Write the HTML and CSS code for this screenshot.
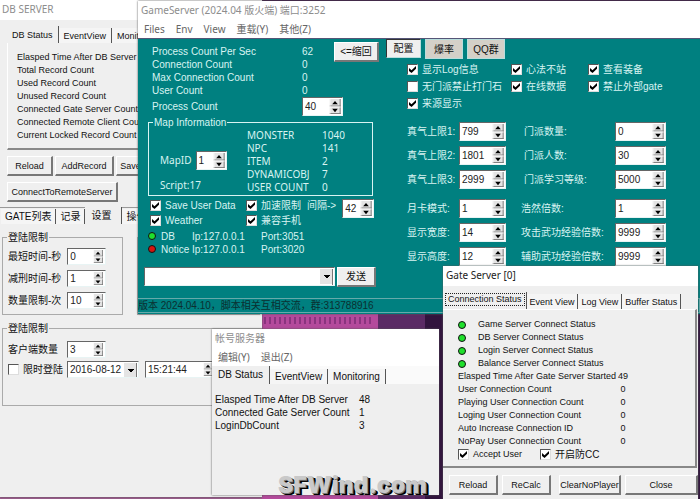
FILE: index.html
```
<!DOCTYPE html>
<html lang="zh-CN">
<head>
<meta charset="utf-8">
<title>GameServer</title>
<link rel="stylesheet" href="styles.css">
</head>
<body>
<svg class="defs" aria-hidden="true">
  <symbol id="arrows" viewBox="0 0 12 16">
    <path d="M0 0H12V16H0Z" fill="#e4e4e4"/>
    <path d="M0 7.5H12M0 15.5H12M11.5 0V16" stroke="#777" fill="none"/>
    <path d="M0 8.5H12M0.5 0V16" stroke="#fff" fill="none"/>
    <path d="M6 2L9 5.500H3ZM3 10.500H9L6 14Z" fill="#000"/>
  </symbol>
</svg>
<main class="desktop">
  <div class="wallpaper"></div>

  <section class="window db">
    <header class="title inactive">DB SERVER</header>
    <nav class="tabs">
      <button class="tab current">DB Status</button><button class="tab">EventView</button><button class="tab">Monitoring</button>
    </nav>
    <div class="panel db-list">
      <p>Elasped Time After DB Server Started</p>
      <p>Total Record Count</p>
      <p>Used Record Count</p>
      <p>Unused Record Count</p>
      <p>Connected Gate Server Count</p>
      <p>Connected Remote Client Count</p>
      <p>Current Locked Record Count</p>
    </div>
    <div class="db-buttons">
      <button class="btn">Reload</button><button class="btn">AddRecord</button><button class="btn">SaveRecord</button>
      <button class="btn wide">ConnectToRemoteServer</button>
    </div>
    <nav class="tabs cn-tabs">
      <button class="tab">GATE列表</button><button class="tab">记录</button><button class="tab current">设置</button><button class="tab">操作</button>
    </nav>
    <div class="db-settings">
      <div class="pair">
        <fieldset class="group limits">
          <legend>登陆限制</legend>
          <label><span>最短时间-秒</span><span class="spin"><input value="0"><svg><use href="#arrows"/></svg></span></label>
          <label><span>减刑时间-秒</span><span class="spin"><input value="1"><svg><use href="#arrows"/></svg></span></label>
          <label><span>数量限制-次</span><span class="spin"><input value="10"><svg><use href="#arrows"/></svg></span></label>
        </fieldset>
        <fieldset class="group rest"></fieldset>
      </div>
      <fieldset class="group clients">
        <legend>登陆限制</legend>
        <label class="row"><span class="client-name">客户端数量</span><span class="spin"><input value="3"><svg><use href="#arrows"/></svg></span></label>
        <div class="row">
          <label class="check"><input type="checkbox">限时登陆</label>
          <select class="date" aria-label="日期"><option>2016-08-12</option></select>
          <span class="spin time"><input value="15:21:44" aria-label="时间"><svg><use href="#arrows"/></svg></span>
        </div>
      </fieldset>
    </div>
  </section>

  <section class="window game">
    <header class="title inactive">GameServer (2024.04 版火端) 端口:3252</header>
    <nav class="menu"><a href="#">Files</a><a href="#">Env</a><a href="#">View</a><a href="#">重载(Y)</a><a href="#">其他(Z)</a></nav>
    <div class="game-body">
      <div class="game-left">
        <div class="top">
          <table class="stats">
            <tr><td>Process Count Per Sec</td><td>62</td></tr>
            <tr><td>Connection Count</td><td>0</td></tr>
            <tr><td>Max Connection Count</td><td>0</td></tr>
            <tr><td>User Count</td><td>0</td></tr>
          </table>
          <button class="btn shrink">&lt;=缩回</button>
        </div>
        <label class="process"><span>Process Count</span><span class="spin"><input value="40"><svg><use href="#arrows"/></svg></span></label>
        <fieldset class="map">
          <legend>Map Information</legend>
          <div class="map-id">
            <label><span>MapID</span><span class="spin"><input value="1"><svg><use href="#arrows"/></svg></span></label>
            <p>Script:17</p>
          </div>
          <table class="objects">
            <tr><td>MONSTER</td><td>1040</td></tr>
            <tr><td>NPC</td><td>141</td></tr>
            <tr><td>ITEM</td><td>2</td></tr>
            <tr><td>DYNAMICOBJ</td><td>7</td></tr>
            <tr><td>USER COUNT</td><td>0</td></tr>
          </table>
        </fieldset>
        <div class="options">
          <div class="stack">
            <label class="check"><input type="checkbox" checked>Save User Data</label>
            <label class="check"><input type="checkbox" checked>Weather</label>
          </div>
          <div class="stack">
            <label class="check"><input type="checkbox" checked>加速限制</label>
            <label class="check"><input type="checkbox" checked>兼容手机</label>
          </div>
          <label class="gap-field">间隔-&gt;<span class="spin"><input value="42"><svg><use href="#arrows"/></svg></span></label>
        </div>
        <table class="links">
          <tr><td><i class="led"></i></td><td>DB</td><td>Ip:127.0.0.1</td><td>Port:3051</td></tr>
          <tr><td><i class="led red"></i></td><td>Notice</td><td>Ip:127.0.0.1</td><td>Port:3020</td></tr>
        </table>
        <div class="send">
          <select aria-label="消息"><option></option></select>
          <button class="btn">发送</button>
        </div>
      </div>
      <div class="game-right">
        <nav class="flat-tabs"><button class="on">配置</button><button>爆率</button><button>QQ群</button></nav>
        <div class="checks">
          <label class="check"><input type="checkbox" checked>显示Log信息</label>
          <label class="check"><input type="checkbox" checked>心法不站</label>
          <label class="check"><input type="checkbox" checked>查看装备</label>
          <label class="check"><input type="checkbox">无门派禁止打门石</label>
          <label class="check"><input type="checkbox" checked>在线数据</label>
          <label class="check"><input type="checkbox" checked>禁止外部gate</label>
          <label class="check"><input type="checkbox" checked>来源显示</label>
        </div>
        <div class="fields">
          <label for="q1">真气上限1:</label><span class="spin"><input id="q1" value="799"><svg><use href="#arrows"/></svg></span>
          <label for="m1">门派数量:</label><span class="spin"><input id="m1" value="0"><svg><use href="#arrows"/></svg></span>
          <label for="q2">真气上限2:</label><span class="spin"><input id="q2" value="1801"><svg><use href="#arrows"/></svg></span>
          <label for="m2">门派人数:</label><span class="spin"><input id="m2" value="30"><svg><use href="#arrows"/></svg></span>
          <label for="q3">真气上限3:</label><span class="spin"><input id="q3" value="2999"><svg><use href="#arrows"/></svg></span>
          <label for="m3">门派学习等级:</label><span class="spin"><input id="m3" value="5000"><svg><use href="#arrows"/></svg></span>
        </div>
        <div class="fields second">
          <label for="k1">月卡模式:</label><span class="spin"><input id="k1" value="1"><svg><use href="#arrows"/></svg></span>
          <label for="h1">浩然倍数:</label><span class="spin"><input id="h1" value="1"><svg><use href="#arrows"/></svg></span>
          <label for="k2">显示宽度:</label><span class="spin"><input id="k2" value="14"><svg><use href="#arrows"/></svg></span>
          <label for="h2">攻击武功经验倍数:</label><span class="spin"><input id="h2" value="9999"><svg><use href="#arrows"/></svg></span>
          <label for="k3">显示高度:</label><span class="spin"><input id="k3" value="12"><svg><use href="#arrows"/></svg></span>
          <label for="h3">辅助武功经验倍数:</label><span class="spin"><input id="h3" value="9999"><svg><use href="#arrows"/></svg></span>
        </div>
      </div>
    </div>
    <footer class="status">版本 2024.04.10，脚本相关互相交流，群:313788916</footer>
  </section>

  <section class="window account">
    <header class="title inactive">帐号服务器</header>
    <nav class="menu"><a href="#">编辑(Y)</a><a href="#">退出(Z)</a></nav>
    <nav class="tabs">
      <button class="tab current">DB Status</button><button class="tab">EventView</button><button class="tab">Monitoring</button>
    </nav>
    <table class="account-list">
      <tr><td>Elasped Time After DB Server</td><td>48</td></tr>
      <tr><td>Connected Gate Server Count</td><td>1</td></tr>
      <tr><td>LoginDbCount</td><td>3</td></tr>
    </table>
  </section>

  <section class="window gate">
    <header class="title">Gate Server [0]</header>
    <nav class="tabs">
      <button class="tab current"><span class="focus">Connection Status</span></button><button class="tab">Event View</button><button class="tab">Log View</button><button class="tab">Buffer Status</button>
    </nav>
    <div class="panel gate-panel">
      <ul>
        <li><i class="led"></i>Game Server Connect Status</li>
        <li><i class="led"></i>DB Server Connect Status</li>
        <li><i class="led"></i>Login Server Connect Status</li>
        <li><i class="led"></i>Balance Server Connect Status</li>
      </ul>
      <table>
        <tr><td>Elasped Time After Gate Server Started</td><td>49</td></tr>
        <tr><td>User Connection Count</td><td>0</td></tr>
        <tr><td>Playing User Connection Count</td><td>0</td></tr>
        <tr><td>Loging User Connection Count</td><td>0</td></tr>
        <tr><td>Auto Increase Connection ID</td><td>0</td></tr>
        <tr><td>NoPay User Connection Count</td><td>0</td></tr>
      </table>
      <div class="gate-checks">
        <label class="check"><input type="checkbox" checked>Accept User</label>
        <label class="check guard"><input type="checkbox" checked>开启防CC</label>
      </div>
    </div>
    <div class="gate-buttons">
      <button class="btn">Reload</button><button class="btn">ReCalc</button><button class="btn">ClearNoPlayer</button><button class="btn">Close</button>
    </div>
  </section>

  <div class="watermark">SFWind.com</div>
</main>
</body>
</html>
```
FILE: styles.css
```
:root {
  --ui: "Liberation Sans", "Noto Sans CJK SC", sans-serif;
  --title: "Noto Sans", "Noto Sans CJK SC", sans-serif;
  --face: #efefef;
  --teal: #008080;
}
* { box-sizing: border-box; }
body { margin: 0; font: 10px/13px var(--ui); color: #111; }
p, ul { margin: 0; padding: 0; list-style: none; }
table { border-collapse: collapse; }
td { padding: 0; white-space: nowrap; }
button, input, select { font: inherit; color: inherit; margin: 0; }
fieldset { margin: 0; padding: 0; min-width: 0; }
legend { padding: 0 1px; }
label { white-space: nowrap; }
.defs { display: none; }

.desktop { position: relative; height: 100vh; overflow: hidden; background: #3a1744; }
.wallpaper {
  position: absolute; inset: 313px 0 0 0;
  background:
    repeating-linear-gradient(90deg, #8a347f 0 2px, transparent 2px 5px) 264px 4px / 110px 7px no-repeat,
    linear-gradient(90deg, #9b5b8c 0 262px, #b44a9c 262px 378px, #5b2b65 378px 425px, #32143e 425px);
}

/* Windows lie freely on the desktop */
.window { position: absolute; background: var(--face); box-shadow: 0 0 2px #555; overflow: hidden; }
.db { left: 0; top: 0; width: 262px; height: 497px; }
.game { left: 138px; right: 0; top: 1px; height: 313px; background: var(--teal); color: #d8f4f2; }
.account { left: 212px; top: 329px; width: 227px; height: 166px; }
.gate { right: 2px; top: 266px; width: 255px; bottom: 0; }

.title { height: 20px; padding: 0 3px; background: #fff; color: #222; font: 10px/18px var(--title); white-space: nowrap; }
.inactive { color: #8d8d8d; }
.menu { display: flex; gap: 11px; height: 17px; padding: 0 6px; background: #fff; font: 10px/16px var(--title); }
.menu a { color: #666; text-decoration: none; }

.tabs { display: flex; align-items: flex-end; white-space: nowrap; }
.tab { height: 15px; padding: 0 4px; border: 0; border-right: 1px solid #555; background: #f5f5f5; line-height: 14px; }
.tab.current { height: 17px; background: var(--face); line-height: 12px; }
.panel { border: 0 solid #888; border-width: 0 2px 2px 0; }

.btn { height: 20px; padding: 0; border: 1px solid #fff; border-right: 2px solid #777; border-bottom: 2px solid #777; background: var(--face); color: #111; line-height: 16px; white-space: nowrap; }

.spin { display: flex; height: 19px; padding: 1px; border: 1px solid #e8f4f4; border-top-color: #666; border-left-color: #666; background: #fff; color: #222; }
.spin input { flex: 1; width: 0; min-width: 0; height: 100%; padding: 0 1px; border: 0; background: transparent; outline: 0; }
.spin svg { flex: none; width: 12px; height: 100%; }

.check { display: flex; align-items: center; gap: 4px; height: 13px; }
.check input { appearance: none; display: grid; place-items: center; width: 11px; height: 11px; background: #fff; border: 1px solid #ddd; border-top-color: #555; border-left-color: #555; }
.check input:checked::before { content: ""; width: 7px; height: 7px; background: #000; clip-path: polygon(0 30%, 36% 60%, 100% 0, 100% 38%, 36% 100%, 0 70%); }

.led { display: inline-block; width: 8px; height: 8px; border: 1px solid #111; border-radius: 50%; background: #1fe02c; }
.led.red { background: #d4150f; }

select { appearance: none; border: 1px solid #e8f4f4; border-top-color: #666; border-left-color: #666; border-radius: 0; color: #222;
  background:
    conic-gradient(from 315deg at 50% 100%, #000 0 90deg, transparent 0) right 4px top 7px / 6px 3px no-repeat,
    linear-gradient(#777, #777) right 1px top 1px / 1px 100% no-repeat,
    linear-gradient(#e4e4e4, #e4e4e4) right 1px top 1px / 13px 15px no-repeat, #fff; }

/* DB server */
.db .title { padding: 0 2px; }
.db .tabs { height: 23px; padding-left: 7px; }
.db, .gate { font-size: 9px; }
.db .tab { padding: 0 5px; }
.db-list { margin-left: 7px; padding: 8px 0 7px 9px; height: 107px; white-space: nowrap; border-left: 1px solid #fff; }
.db-buttons { display: flex; flex-wrap: wrap; gap: 6px 2px; padding: 6px 7px 5px; }
.db-buttons .btn { width: 46px; }
.db-buttons .btn + .btn { width: 59px; }
.db-buttons .btn.wide { width: 111px; }
.db .cn-tabs { height: 17px; margin: 0; padding-left: 1px; border-top: 1px solid #999; font: 10px/13px var(--ui); }
.db .cn-tabs .tab { padding: 0 4px; }
.db .cn-tabs .tab.current { padding: 0 10px 0 6px; }
.db-settings { padding: 7px 2px; font: 10px/13px var(--ui); }
.pair { display: flex; gap: 14px; }
.group { border: 1px solid #aaa; }
.group legend { margin-left: 4px; }
.limits { width: 121px; height: 84px; }
.limits label { display: flex; align-items: center; gap: 6px; height: 17px; margin: 5px 0 0 5px; }
.limits legend + label { margin-top: 4px; }
.limits .spin { width: 39px; height: 17px; }
.rest { flex: 1; margin-top: 6px; }
.clients { margin-top: 7px; height: 84px; margin-right: -8px; }
.clients .row { display: flex; align-items: center; margin: 6px 0 0 5px; height: 17px; }
.clients .row + .row { margin-top: 3px; }
.client-name { width: 59px; }
.clients .spin { width: 39px; height: 17px; }
.clients .check { width: 59px; }
.clients .date { width: 72px; height: 17px; padding: 0 2px; }
.clients .time { width: 71px; margin-left: 6px; }

/* Game server */
.game-body { display: flex; height: 260px; border-top: 1px solid #557; }
.game-left { width: 248px; padding: 3px 0 0 6px; }
.top { display: flex; justify-content: space-between; padding: 0 7px 0 8px; height: 55px; }
.stats { margin-top: 3px; height: 52px; }
.stats td:first-child { width: 150px; }
.shrink { width: 45px; }
.process { display: flex; align-items: center; margin-left: 8px; height: 19px; }
.process > span:first-child { width: 150px; }
.process .spin { width: 41px; }
.map { display: flex; width: 225px; height: 80px; margin-left: 4px; border: 1px solid #d8f4f2; font-family: var(--title); }
.map legend { margin-left: 4px; font-family: var(--ui); }
.map-id { width: 98px; padding: 22px 0 0 11px; }
.map-id label { display: flex; align-items: center; gap: 4px; }
.map-id .spin { width: 31px; font-family: var(--ui); }
.map-id p { margin-top: 9px; }
.objects { height: 65px; }
.objects td:first-child { width: 75px; }
.options { display: flex; margin: 3px 0 0 6px; }
.stack { display: grid; gap: 2px; width: 96px; }
.stack + .stack { width: 61px; }
.gap-field { display: flex; gap: 6px; height: 19px; }
.gap-field .spin { width: 32px; }
.links { margin: 3px 0 0 4px; height: 26px; }
.links td:nth-child(1) { width: 13px; }
.links td:nth-child(2) { width: 31px; }
.links td:nth-child(3) { width: 69px; }
.send { display: flex; gap: 2px; margin-top: 11px; }
.send select { width: 191px; height: 19px; }
.send .btn { width: 39px; }
.game-right { flex: 1; }
.flat-tabs { display: flex; gap: 4px; height: 22px; }
.flat-tabs button { width: 38px; height: 20px; padding: 0; border: 1px solid #b9dedd; background: #d4d0c8; color: #111; }
.flat-tabs button.on { width: 35px; height: 19px; border-top-color: #333; border-left-color: #333; background: var(--face); }
.checks { display: grid; grid-template-columns: 104px 77px auto; gap: 4px 0; padding: 2px 0 0 21px; }
.fields { display: grid; grid-template-columns: 52px 65px 91px 51px; align-items: center; row-gap: 5px; padding: 12px 0 0 21px; }
.fields.second { grid-template-columns: 52px 62px 94px 51px; padding-top: 10px; }
.fields .spin { width: 51px; }
.fields .spin:nth-child(4n + 2) { width: 47px; }
.status { height: 15px; border: 1px solid #6aa; border-left: 0; color: #0b2f30; line-height: 13px; white-space: nowrap; }

/* Account server */
.account .tabs { height: 18px; background: #fafafa; }
.account .tab { padding: 0 5px; }
.account .tab.current { padding: 0 6px; height: 18px; line-height: 16px; }
.account-list { margin: 9px 0 0 3px; }
.account-list td:first-child { width: 144px; }

/* Gate server */
.gate .title { padding: 0 3px; }
.gate .tabs { height: 23px; padding-left: 2px; }
.gate .tab { padding: 0 3px; }
.gate .tab.current { padding: 0 1px 3px 0; }
.focus { display: block; height: 13px; padding: 0 2px; border: 1px dotted #222; line-height: 11px; }
.gate-panel { height: 159px; padding: 8px 0 0 15px; border-top: 1px solid #fff; margin-right: 1px; }
.gate-panel li { display: flex; align-items: center; gap: 12px; height: 13px; }
.gate-panel td:first-child { width: 160px; }
.gate-panel td + td { text-align: center; }
.gate-checks { display: flex; gap: 18px; }
.guard { font-size: 10px; }
.gate-buttons { display: grid; grid-template-columns: 49px 49px 66px 1fr; gap: 4px; padding: 7px 0 0 6px; }
.gate-buttons .btn:nth-child(3) { margin-left: 4px; }

.watermark { position: absolute; left: 278px; top: 473px; font: 900 23px/24px Inter, "Liberation Sans", sans-serif; color: #c9c9c9; text-shadow: 1px 1px #777, 2px 2px #000, 3px 2px #000; }
```
